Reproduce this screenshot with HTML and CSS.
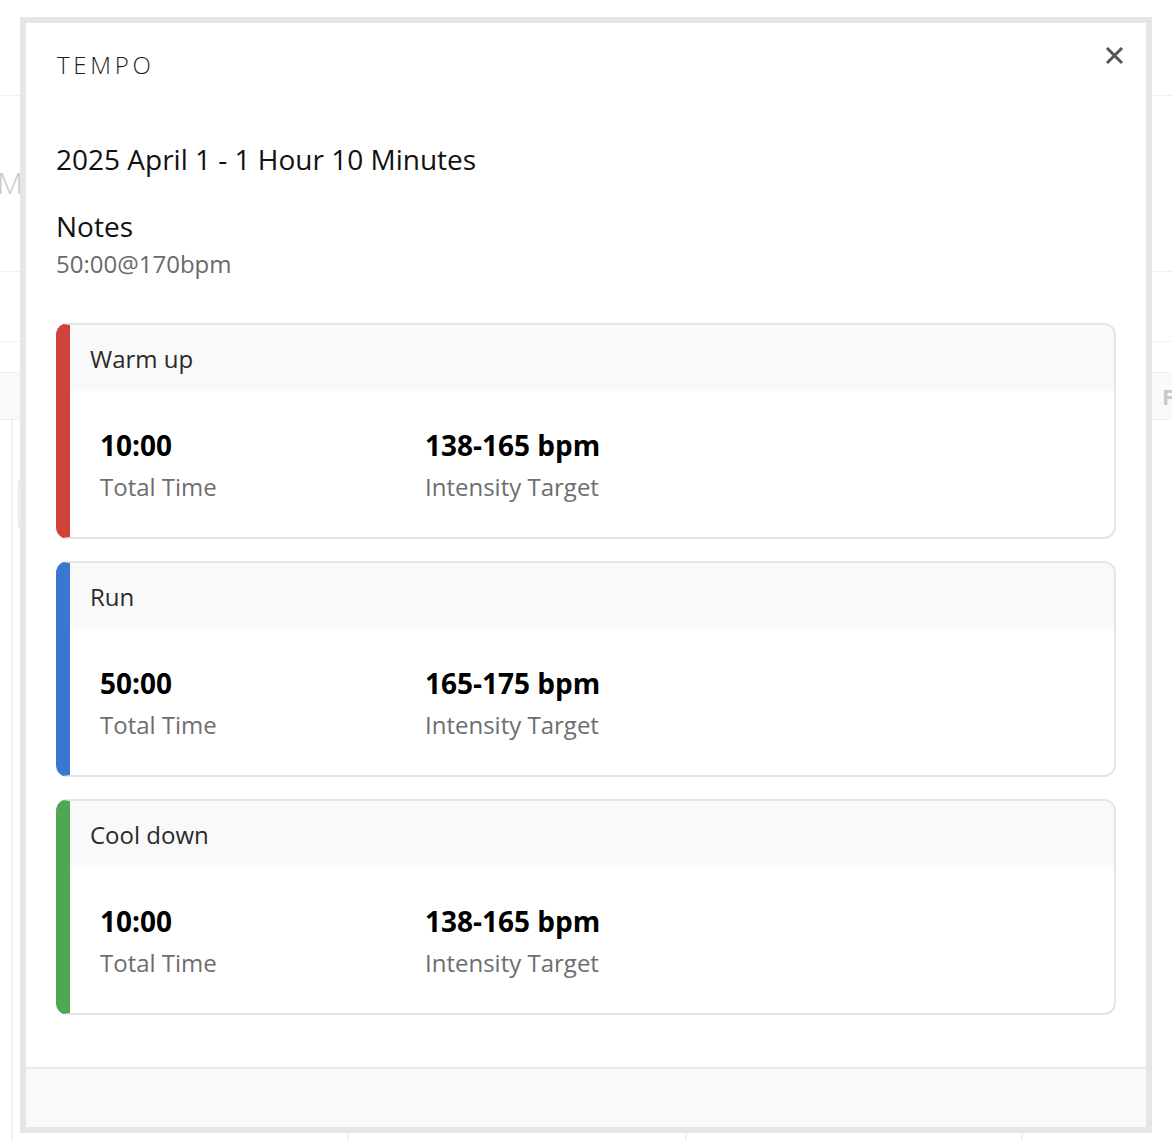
FILE: index.html
```html
<!DOCTYPE html>
<html lang="en">
<head>
<meta charset="utf-8">
<title>Tempo</title>
<link rel="stylesheet" href="styles.css">
</head>
<body>
<div class="page">
  <div class="bg-top"></div>
  <div class="bg-title"><span class="bg-month">March</span></div>
  <div class="bg-bar"></div>
  <div class="bg-gap"></div>
  <div class="bg-days"><span class="bg-day">Fri</span></div>
  <div class="bg-grid">
    <div class="bg-col"><span class="bg-chip"></span></div>
    <div class="bg-col"></div>
    <div class="bg-col"></div>
    <div class="bg-col"></div>
  </div>
</div>

<div class="modal">
  <div class="modal-head">
    <div class="modal-kicker">TEMPO</div>
    <button class="close" aria-label="Close">
      <svg width="19" height="19" viewBox="0 0 19 19"><path d="M2 2L17 17M17 2L2 17" stroke="#555" stroke-width="3" stroke-linecap="butt"/></svg>
    </button>
  </div>
  <div class="modal-body">
    <h1 class="title">2025 April 1 - 1 Hour 10 Minutes</h1>
    <h2 class="notes-title">Notes</h2>
    <p class="notes">50:00@170bpm</p>

    <div class="steps">
      <div class="step step-warm">
        <div class="step-head">Warm up</div>
        <div class="step-body">
          <div class="stat"><div class="stat-value">10:00</div><div class="stat-label">Total Time</div></div>
          <div class="stat"><div class="stat-value">138-165 bpm</div><div class="stat-label">Intensity Target</div></div>
        </div>
      </div>
      <div class="step step-run">
        <div class="step-head">Run</div>
        <div class="step-body">
          <div class="stat"><div class="stat-value">50:00</div><div class="stat-label">Total Time</div></div>
          <div class="stat"><div class="stat-value">165-175 bpm</div><div class="stat-label">Intensity Target</div></div>
        </div>
      </div>
      <div class="step step-cool">
        <div class="step-head">Cool down</div>
        <div class="step-body">
          <div class="stat"><div class="stat-value">10:00</div><div class="stat-label">Total Time</div></div>
          <div class="stat"><div class="stat-value">138-165 bpm</div><div class="stat-label">Intensity Target</div></div>
        </div>
      </div>
    </div>
  </div>
  <div class="modal-foot"></div>
</div>
</body>
</html>
```

FILE: styles.css
```css
html, body {
  margin: 0;
  padding: 0;
  background: #fff;
  font-family: "Open Sans", "DejaVu Sans", sans-serif;
}

body {
  width: 1172px;
  height: 1140px;
  overflow: hidden;
  position: relative;
}

/* ---------- faint background page ---------- */
.page {
  width: 1172px;
  height: 1140px;
  display: flex;
  flex-direction: column;
}
.bg-top {
  height: 95px;
  border-bottom: 1px solid #f1f1f1;
}
.bg-title {
  height: 175px;
  border-bottom: 1px solid #f1f1f1;
  display: flex;
  align-items: center;
}
.bg-month {
  font-size: 30px;
  font-weight: 300;
  color: #c8c8c8;
  margin-left: -3px;
  margin-top: -3px;
}
.bg-bar {
  height: 69px;
  border-bottom: 1px solid #f1f1f1;
}
.bg-gap {
  height: 30px;
}
.bg-days {
  height: 46px;
  background: #fafafa;
  border-top: 1px solid #efefef;
  border-bottom: 1px solid #efefef;
  display: flex;
  align-items: center;
  justify-content: flex-end;
}
.bg-day {
  font-size: 22px;
  font-weight: 700;
  color: #c9c9c9;
  margin-right: -30px;
  width: 40px;
}
.bg-grid {
  flex: 1;
  display: grid;
  grid-template-columns: 336px 338px 336px 1fr;
  margin-left: 11px;
}
.bg-col {
  border-left: 2px solid #f1f1f1;
  position: relative;
}
.bg-chip {
  position: absolute;
  left: 5px;
  top: 57px;
  width: 12px;
  height: 52px;
  border: 1px solid #dfeadf;
  background: #f1f7f1;
  border-radius: 6px;
}

/* ---------- modal ---------- */
.modal {
  position: absolute;
  left: 20px;
  top: 17px;
  width: 1132px;
  height: 1116px;
  box-sizing: border-box;
  border: 6px solid #e6e6e6;
  background: #fff;
  display: flex;
  flex-direction: column;
}

.modal-head {
  display: flex;
  justify-content: space-between;
  align-items: flex-start;
  padding: 24px 22px 0 31px;
}
.modal-kicker {
  font-size: 24px;
  line-height: 36px;
  font-weight: 300;
  letter-spacing: 3.7px;
  color: #1e1e1e;
}
.close {
  border: 0;
  background: none;
  padding: 0;
  margin-top: -1px;
  width: 19px;
  height: 19px;
  display: block;
  cursor: pointer;
}
.close svg {
  display: block;
}

.modal-body {
  flex: 1;
  padding: 0 30px;
}

.title {
  margin: 56px 0 0;
  font-size: 28px;
  line-height: 40px;
  font-weight: 400;
  color: #111;
}
.notes-title {
  margin: 27px 0 0;
  font-size: 28px;
  line-height: 40px;
  font-weight: 400;
  color: #111;
}
.notes {
  margin: 0;
  font-size: 24px;
  line-height: 36px;
  color: #6a6a6a;
}

.steps {
  margin-top: 41px;
  display: flex;
  flex-direction: column;
  gap: 22px;
}

.step {
  border: 2px solid #e5e5e5;
  border-left: 14px solid #d0433b;
  border-radius: 12px;
  overflow: hidden;
}
.step-run { border-left-color: #3a77d1; }
.step-cool { border-left-color: #4fa653; }

.step-head {
  background: #f9f9f9;
  padding: 16px 20px 14px;
  font-size: 24px;
  line-height: 36px;
  color: #2a2a2a;
}

.step-body {
  display: grid;
  grid-template-columns: 325px 1fr;
  padding: 30px 30px 32px;
}
.stat-value {
  font-size: 28px;
  line-height: 48px;
  font-weight: 700;
  color: #000;
}
.stat-label {
  font-size: 24px;
  line-height: 36px;
  color: #6e6e6e;
}

.modal-foot {
  height: 58px;
  border-top: 2px solid #ebebeb;
  background: #f9f9f9;
}
```
